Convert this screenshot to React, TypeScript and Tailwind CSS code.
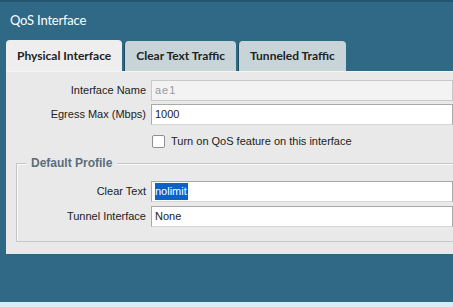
export default function App() {
  const tabs = ["Physical Interface", "Clear Text Traffic", "Tunneled Traffic"];

  return (
    <div className="w-[453px] h-[307px] overflow-hidden bg-[#2f6985] flex flex-col border-t-2 border-[#245670]">
      <div className="h-[38px] px-[10px] flex items-center text-white text-[13px] font-['Lato',sans-serif] tracking-[-0.2px]">
        QoS Interface
      </div>

      {/* tab strip */}
      <div className="flex gap-[2px] pl-[6px] h-[31px] items-end">
        {tabs.map((t, i) => (
          <div
            key={t}
            className={
              i === 0
                ? "h-[31px] px-[11px] flex items-center rounded-t-[4px] bg-[#eeeeee] text-[#222] text-[12px] font-bold font-['Lato',sans-serif]"
                : "h-[30px] px-[11px] flex items-center rounded-t-[4px] bg-[#c7d5d9] text-[#222] text-[12px] font-bold font-['Lato',sans-serif] border-l border-[#1d4a60]"
            }
          >
            {t}
          </div>
        ))}
      </div>

      {/* panel */}
      <div className="ml-[6px] h-[183px] bg-[#e9e9e9] border-t border-[#f4f4f4] font-['Liberation_Sans',sans-serif] text-[11px] text-[#222] pt-[8px]">
        <div className="flex items-center h-[21px]">
          <div className="w-[145px] text-right pr-[5px]">Interface Name</div>
          <div className="flex-1 h-[21px] bg-[#f3f3f3] border border-[#c9c9c9] px-[3px] flex items-center text-[#999] tracking-[1px]">
            ae1
          </div>
        </div>
        <div className="flex items-center h-[21px] mt-[3px]">
          <div className="w-[145px] text-right pr-[5px]">Egress Max (Mbps)</div>
          <div className="flex-1 h-[21px] bg-white border border-[#a9a9a9] border-b-[#d6d6d6] px-[3px] flex items-center">
            1000
          </div>
        </div>
        <div className="flex items-center h-[20px] mt-[6px] pl-[146px]">
          <div className="w-[13px] h-[13px] bg-white border border-[#8f8f8f] rounded-[2px]" />
          <span className="ml-[6px]">Turn on QoS feature on this interface</span>
        </div>

        {/* fieldset */}
        <div className="relative mt-[12px] ml-[10px] h-[79px] border border-[#c6c6c6] border-r-0 shadow-[inset_1px_1px_0_#fafafa]">
          <div className="absolute -top-[9px] left-[9px] px-[5px] bg-[#e9e9e9] text-[#5a6e7c] font-bold text-[12px] leading-[16px]">
            Default Profile
          </div>
          <div className="flex items-center h-[21px] mt-[17px]">
            <div className="w-[134px] text-right pr-[5px]">Clear Text</div>
            <div className="flex-1 h-[21px] bg-white border border-[#a9a9a9] border-b-[#d6d6d6] px-[3px] flex items-center">
              <span className="bg-[#0b63c8] text-white pr-[1px]">nolimit</span>
            </div>
          </div>
          <div className="flex items-center h-[21px] mt-[4px]">
            <div className="w-[134px] text-right pr-[5px]">Tunnel Interface</div>
            <div className="flex-1 h-[21px] bg-white border border-[#a9a9a9] border-b-[#d6d6d6] px-[3px] flex items-center">
              None
            </div>
          </div>
        </div>
      </div>

      <div className="flex-1" />
      <div className="h-[5px] bg-[#dcebf2]" />
    </div>
  );
}
